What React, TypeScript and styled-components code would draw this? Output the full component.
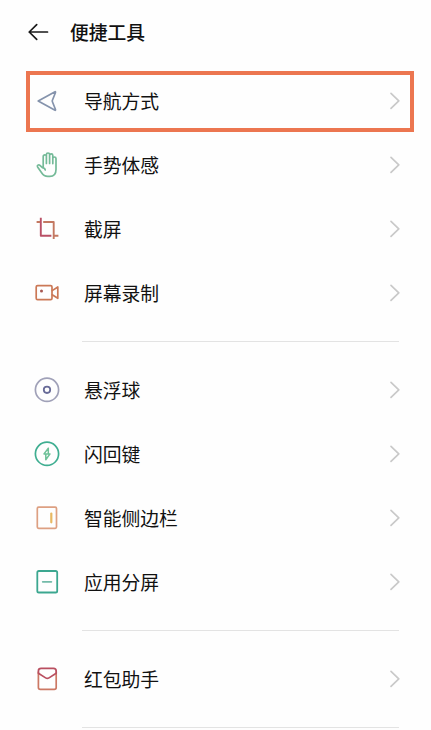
import React from "react";
import styled, { createGlobalStyle } from "styled-components";

const GlobalStyle = createGlobalStyle`
  body {
    margin: 0;
    background: #fefefe;
    color: #111;
    font-family: "Noto Sans CJK SC", sans-serif;
  }
`;

const Screen = styled.main`
  box-sizing: border-box;
  height: 730px;
  overflow: hidden;
`;

const Header = styled.header`
  display: flex;
  align-items: center;
  gap: 20px;
  height: 64px;
  padding-left: 26px;
  margin-bottom: 5px;
`;

const BackButton = styled.button`
  display: flex;
  width: 24px;
  height: 24px;
  padding: 0;
  border: 0;
  background: none;
`;

const Title = styled.h1`
  margin: 0;
  font-size: 18.8px;
  line-height: 28px;
  font-weight: 500;
`;

const Group = styled.section`
  display: flex;
  flex-direction: column;
`;

const Divider = styled.hr`
  width: 317px;
  height: 1px;
  margin: 16px 0 16px 82px;
  border: 0;
  background: #e3e3e3;
`;

const Row = styled.div`
  position: relative;
  box-sizing: border-box;
  display: flex;
  align-items: center;
  height: 64px;
  padding: 0 28px 0 32px;
`;

const Highlight = styled.div`
  position: absolute;
  box-sizing: border-box;
  inset: 2px 17px 1px 26px;
  border: 4px solid #ec7650;
`;

const Label = styled.span`
  flex: 1;
  margin-left: 22px;
  font-size: 18.8px;
  line-height: 28px;
`;

const Icon = styled.svg`
  display: block;
  flex: none;
  fill: none;
  stroke-width: 1.7;
  stroke-linecap: round;
  stroke-linejoin: round;
`;

const glyphs = {
  nav: (
    <path stroke="#8593ac" d="M6.2 15 22.6 5.9Q23.9 5.3 23.4 6.7L20.4 14.2Q20.1 15 20.4 15.8L23.4 23.3Q23.9 24.7 22.6 24.1Z" />
  ),
  hand: (
    <path
      stroke="#74ba98"
      d="M11.2 17.2V6.4a1.6 1.6 0 0 1 3.2 0V13.4M14.4 13.4V4.6a1.6 1.6 0 0 1 3.2 0V13.4M17.6 13.4V5.4a1.6 1.6 0 0 1 3.2 0V13.6M20.8 13.6V8.6a1.6 1.6 0 0 1 3.2 0V19.5C24 24 21.6 26.4 17.8 26.4H15.8C12.8 26.4 11 25 9.6 22.8L5.6 17C4.6 15.4 6.6 14.2 7.9 15.3L10.4 17.6Q13 18.1 13.2 20"
    />
  ),
  crop: (
    <g strokeLinecap="butt" strokeWidth="1.9">
      <path stroke="#b95066" d="M8.8 3.8V21.7H19.4" />
      <path stroke="#c37861" d="M4.6 8H8M11.2 8H21.7V25M21.7 21.7H26.4" />
    </g>
  ),
  record: (
    <g stroke="#cb7856">
      <rect x="4.2" y="7.6" width="15.8" height="14.1" rx="1.4" />
      <path d="M20.2 12.6 25.8 9V20.3L20.2 16.8" />
      <circle cx="9.5" cy="13" r="1.5" fill="#a65752" stroke="none" />
    </g>
  ),
  ball: (
    <>
      <circle cx="15" cy="14.8" r="11.6" stroke="#a0a1b8" />
      <circle cx="15" cy="14.8" r="3.2" stroke="#686b98" strokeWidth="1.8" />
    </>
  ),
  flash: (
    <>
      <circle cx="15" cy="14.8" r="11.6" stroke="#3fae91" />
      <path stroke="#6ec198" d="M16.3 9.2 12 14.9H18L13.8 20.8M16.3 9.2V14.6M13.8 15.2V20.8" strokeWidth="1.5" />
    </>
  ),
  sidebar: (
    <>
      <rect x="5.3" y="4.2" width="19.2" height="21.2" rx="1.3" stroke="#dda082" />
      <path d="M19.3 10.5V19.3" stroke="#e8b862" strokeWidth="2.2" />
    </>
  ),
  split: (
    <>
      <rect x="5.3" y="4" width="19.9" height="21.5" rx="1.6" stroke="#3ca790" strokeWidth="1.8" />
      <path d="M10.7 14.8H19.4" stroke="#73bba9" />
    </>
  ),
  packet: (
    <>
      <path stroke="#cc7864" d="M6.4 8V23.5Q6.4 25.4 8.3 25.4H22.3Q24.2 25.4 24.2 23.5V8" />
      <path stroke="#b94f60" d="M6.4 9.2V7Q6.4 4.3 9.1 4.3H21.5Q24.2 4.3 24.2 7V9.2L17 13.9Q15.3 15 13.6 13.9Z" />
    </>
  ),
};

type Item = { icon: keyof typeof glyphs; label: string; highlighted?: boolean };

const groups: Item[][] = [
  [
    { icon: "nav", label: "导航方式", highlighted: true },
    { icon: "hand", label: "手势体感" },
    { icon: "crop", label: "截屏" },
    { icon: "record", label: "屏幕录制" },
  ],
  [
    { icon: "ball", label: "悬浮球" },
    { icon: "flash", label: "闪回键" },
    { icon: "sidebar", label: "智能侧边栏" },
    { icon: "split", label: "应用分屏" },
  ],
  [{ icon: "packet", label: "红包助手" }],
];

export default function App() {
  return (
    <Screen>
      <GlobalStyle />
      <Header>
        <BackButton aria-label="返回">
          <Icon width="24" height="24" viewBox="0 0 24 24" stroke="#191919">
            <path d="M21.5 12H3.2M10.7 4.7 3.2 12 10.7 19.3" />
          </Icon>
        </BackButton>
        <Title>便捷工具</Title>
      </Header>
      {groups.map((items) => (
        <React.Fragment key={items[0].icon}>
          <Group>
            {items.map(({ icon, label, highlighted }) => (
              <Row key={icon}>
                <Icon width="30" height="30" viewBox="0 0 30 30">
                  {glyphs[icon]}
                </Icon>
                <Label>{label}</Label>
                <Icon width="16" height="20" viewBox="0 0 16 20" stroke="#c9c9c9">
                  <path d="M4 2.3 11.8 9.8 4 17.3" />
                </Icon>
                {highlighted && <Highlight />}
              </Row>
            ))}
          </Group>
          <Divider />
        </React.Fragment>
      ))}
    </Screen>
  );
}
